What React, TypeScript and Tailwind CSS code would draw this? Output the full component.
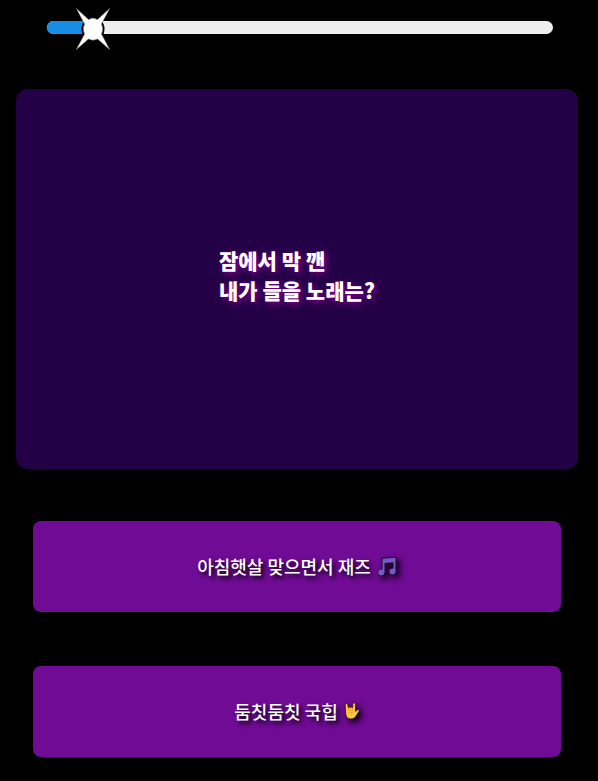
import React from "react";

const TOTAL_QUESTIONS = 11;
const CURRENT_QUESTION = 1;

function Spark() {
  return (
    <svg viewBox="0 0 36 44" className="h-11 w-9" aria-hidden="true">
      <ellipse cx="18" cy="22" rx="11.5" ry="12.5" fill="#000" />
      <path
        d="M1 1 L13.500 12.500 Q18 9.500 22.500 12.500 L35 1 L26.500 17 Q29 22 26.500 27 L35 43 L22.500 32 Q18 34.500 13.500 32 L1 43 L9.500 27 Q7 22 9.500 17 Z"
        fill="#fff"
        stroke="#555"
        strokeWidth="0.5"
      />
    </svg>
  );
}

function Progress({ current, total }: { current: number; total: number }) {
  const percent = `${(current / total) * 100}%`;
  return (
    <div
      role="progressbar"
      aria-label="진행률"
      aria-valuemin={0}
      aria-valuemax={total}
      aria-valuenow={current}
      className="relative h-[13px] rounded-full bg-[#eeeeee]"
    >
      <div className="h-full rounded-l-full bg-[#168ee5]" style={{ width: percent }} />
      <div className="absolute -top-[14px] -translate-x-1/2" style={{ left: percent }}>
        <Spark />
      </div>
    </div>
  );
}

function MusicNotes() {
  return (
    <svg
      viewBox="0 0 20 20"
      className="h-5 w-5 drop-shadow-[3px_3px_3px_#000000]"
      role="img"
      aria-label="음표"
    >
      <g fill="#7758c4" stroke="#160d28" strokeWidth="2" strokeLinejoin="round">
        <path d="M5.500 2.800 L18.500 1.800 V15.500 H16.500 V6.300 L7.500 7 V17 H5.500 Z" />
        <circle cx="4.200" cy="16.500" r="2.600" />
        <circle cx="15.500" cy="15.500" r="2.600" />
      </g>
      <g fill="#7758c4">
        <path d="M5.500 2.800 L18.500 1.800 V15.500 H16.500 V6.300 L7.500 7 V17 H5.500 Z" />
        <circle cx="4.200" cy="16.500" r="3" />
        <circle cx="15.500" cy="15.500" r="3" />
      </g>
    </svg>
  );
}

function RockHand() {
  return (
    <svg
      viewBox="0 0 16 18"
      className="h-[18px] w-4 drop-shadow-[3px_3px_3px_#000000]"
      role="img"
      aria-label="락 손 모양"
    >
      <path
        d="M1.200 3 Q1.200 1.500 2.500 1.500 Q3.700 1.500 3.900 3 L4.300 5.600 Q5.500 4.600 6.600 5.600 Q7.700 4.600 8.600 5.600 L8.800 2.200 Q9 0.800 10.200 0.800 Q11.500 0.800 11.500 2.400 L11.500 9.500 L13 8 Q14.500 7 15.200 8.500 Q15.300 9.200 14.500 10 L12 14 Q10.500 17 7 17 Q2.300 17 1.700 12 Z"
        fill="#ffc83d"
        stroke="#30180c"
        strokeWidth="0.800"
        strokeLinejoin="round"
      />
      <path d="M4.300 6 V9 M6.600 6 V9 M8.600 6 V9 M5 10.200 H8.500 L7 12.500" fill="none" stroke="#e08a10" strokeWidth="0.600" />
    </svg>
  );
}

function Answer({ label, icon }: { label: string; icon: React.ReactNode }) {
  return (
    <button
      type="button"
      className="flex h-[91px] w-full cursor-pointer items-center justify-center gap-1.5 rounded-lg bg-[#6f0b94] pb-0.5 text-[18px] leading-6 font-medium text-white [text-shadow:3px_3px_4px_#000000]"
    >
      <span>{label}</span>
      {icon}
    </button>
  );
}

export default function App() {
  return (
    <main className="min-h-screen bg-black pt-[21px] pr-5 pb-6 pl-4 font-['Noto_Sans_CJK_KR',sans-serif]">
      <header className="pr-[25px] pl-[31px]">
        <Progress current={CURRENT_QUESTION} total={TOTAL_QUESTIONS} />
      </header>
      <section className="mt-[55px] flex h-[380px] items-center justify-center rounded-xl bg-[#240046] pb-2">
        <h1 className="text-[21px] leading-[30px] font-black text-white [text-shadow:2px_2px_6px_#90009a]">
          잠에서 막 깬
          <br />
          내가 들을 노래는?
        </h1>
      </section>
      <div className="mt-[52px] flex flex-col gap-[54px] px-[17px]">
        <Answer label="아침햇살 맞으면서 재즈" icon={<MusicNotes />} />
        <Answer label="둠칫둠칫 국힙" icon={<RockHand />} />
      </div>
    </main>
  );
}
